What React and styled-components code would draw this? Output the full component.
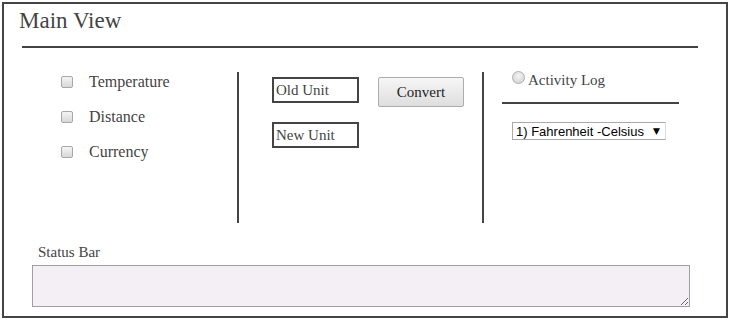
import React from "react";
import styled, { createGlobalStyle } from "styled-components";

const Global = createGlobalStyle`
  body {
    margin: 0;
    background: #fff;
    font-family: "Liberation Serif", "Times New Roman", serif;
    color: #444;
  }
`;

const Frame = styled.div`
  box-sizing: border-box;
  margin: 2px;
  width: 726px;
  height: 316px;
  border: 2px solid #444;
  padding-top: 4px;
`;

const Title = styled.h1`
  margin: 0 0 0 15px;
  font-size: 23px;
  line-height: 26px;
  font-weight: normal;
  color: #444;
`;

const Rule = styled.div`
  height: 2px;
  width: ${(p) => p.width}px;
  margin: ${(p) => p.top}px 0 0 ${(p) => p.left}px;
  background: #444;
`;

const Columns = styled.div`
  display: flex;
  margin-top: 24px;
  height: 151px;
`;

const Column = styled.div`
  box-sizing: border-box;
  width: ${(p) => (p.width ? `${p.width}px` : "auto")};
  flex: ${(p) => (p.width ? "none" : 1)};
  border-right: ${(p) => (p.divider ? "2px solid #444" : "none")};
`;

const Options = styled.div`
  display: flex;
  flex-direction: column;
  gap: 15px;
  padding-left: 57px;
`;

const OptionRow = styled.label`
  display: flex;
  align-items: center;
  height: 20px;
  gap: 16px;
  font-size: 16px;
  line-height: 20px;
`;

const Check = styled.input.attrs({ type: "checkbox" })`
  appearance: none;
  box-sizing: border-box;
  margin: 0;
  width: 12px;
  height: 12px;
  border: 1px solid #a8a8a8;
  border-radius: 2px;
  background: linear-gradient(#f4f4f4, #d8d8d8);
`;

const Converter = styled.div`
  display: flex;
  gap: 19px;
  padding: 5px 0 0 33px;
`;

const Fields = styled.div`
  display: flex;
  flex-direction: column;
  gap: 19px;
`;

const Field = styled.div`
  box-sizing: border-box;
  width: 87px;
  height: 26px;
  border: 2px solid #444;
  padding-left: 2px;
  font-size: 15px;
  line-height: 22px;
  color: #444;
`;

const Button = styled.button`
  box-sizing: border-box;
  width: 86px;
  height: 30px;
  border: 1px solid #adadad;
  border-radius: 2px;
  background: linear-gradient(#f6f6f6, #dedede);
  font-family: "Liberation Serif", "Times New Roman", serif;
  font-size: 15px;
  color: #222;
  padding: 0;
`;

const LogPanel = styled.div`
  margin-top: -3px;
`;

const LogRow = styled.label`
  display: flex;
  align-items: flex-start;
  gap: 3px;
  height: 20px;
  padding-left: 28px;
  font-size: 15px;
  line-height: 18px;
`;

const Radio = styled.input.attrs({ type: "radio" })`
  appearance: none;
  box-sizing: border-box;
  margin: 2px 0 0;
  width: 13px;
  height: 13px;
  border: 1px solid #b0b0b0;
  border-radius: 50%;
  background: radial-gradient(circle at 50% 35%, #f4f4f4, #cfcfcf);
`;

const LogLabel = styled.span`
  padding-top: 2px;
`;

const SelectBox = styled.div`
  box-sizing: border-box;
  display: flex;
  align-items: center;
  justify-content: space-between;
  width: 154px;
  height: 18px;
  margin: 18px 0 0 28px;
  border: 1px solid #a9a9a9;
  border-right-color: #ddd;
  padding: 0 5px 0 3px;
  font-family: "Liberation Sans", Arial, sans-serif;
  font-size: 13px;
  color: #000;
`;

const Arrow = styled.span`
  font-family: "DejaVu Sans", sans-serif;
  font-size: 9px;
`;

const Status = styled.div`
  padding: 20px 0 0 28px;
`;

const StatusLabel = styled.div`
  margin-left: 6px;
  font-size: 15px;
  line-height: 18px;
`;

const StatusArea = styled.textarea`
  display: block;
  box-sizing: border-box;
  width: 658px;
  height: 42px;
  margin-top: 4px;
  border: 1px solid #a0a0a0;
  background: #f3eff4;
`;

export default function App() {
  return (
    <>
      <Global />
      <Frame>
        <Title>Main View</Title>
        <Rule width={676} top={12} left={18} />
        <Columns>
          <Column width={235} divider>
            <Options>
              {["Temperature", "Distance", "Currency"].map((t) => (
                <OptionRow key={t}>
                  <Check />
                  {t}
                </OptionRow>
              ))}
            </Options>
          </Column>
          <Column width={245} divider>
            <Converter>
              <Fields>
                <Field>Old Unit</Field>
                <Field>New Unit</Field>
              </Fields>
              <Button>Convert</Button>
            </Converter>
          </Column>
          <Column>
            <LogPanel>
              <LogRow>
                <Radio />
                <LogLabel>Activity Log</LogLabel>
              </LogRow>
              <Rule width={177} top={13} left={18} />
              <SelectBox>
                <span>1) Fahrenheit -Celsius</span>
                <Arrow>▼</Arrow>
              </SelectBox>
            </LogPanel>
          </Column>
        </Columns>
        <Status>
          <StatusLabel>Status Bar</StatusLabel>
          <StatusArea />
        </Status>
      </Frame>
    </>
  );
}
